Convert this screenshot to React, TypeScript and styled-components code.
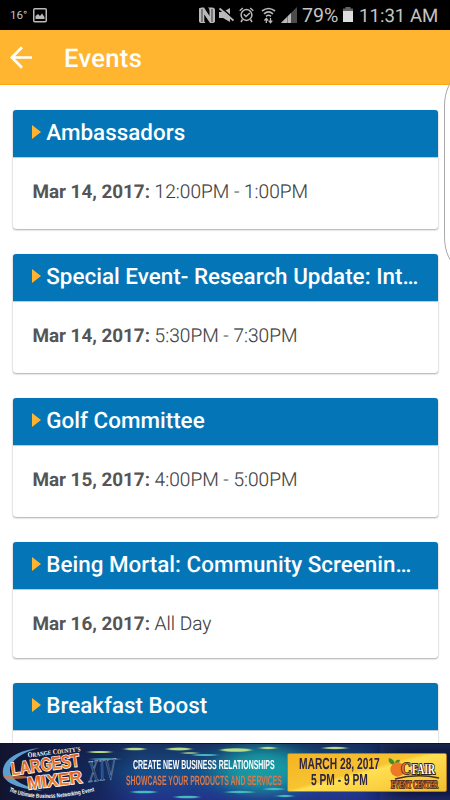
import React from "react";
import styled, { createGlobalStyle } from "styled-components";

const Global = createGlobalStyle`
  * { box-sizing: border-box; }
  html, body { margin: 0; padding: 0; overflow: hidden; }
  body {
    background: #fff;
    font-family: Roboto, "Noto Sans", sans-serif;
    text-rendering: geometricPrecision;
  }
`;

const Screen = styled.div`
  position: relative;
  display: flex;
  flex-direction: column;
  width: 450px;
  height: 800px;
  overflow: hidden;
  background: #fff;
`;

const StatusBar = styled.header`
  display: flex;
  flex: none;
  align-items: center;
  justify-content: space-between;
  height: 30px;
  padding: 0 12px 0 10px;
  background: #000;
  color: #c4c4c4;
`;

const StatusGroup = styled.div`
  display: flex;
  align-items: center;
`;

const IconRow = styled.div`
  display: grid;
  grid-template-columns: 20px 20px 22px 20px 21px;
  align-items: center;
`;

const Temperature = styled.span`
  width: 23px;
  font-size: 11.5px;
  line-height: 30px;
`;

const StatusText = styled.span<{ $width: number; $size: number }>`
  width: ${(p) => p.$width}px;
  padding-top: 2px;
  font-size: ${(p) => p.$size}px;
  line-height: 30px;
  white-space: nowrap;
`;

const Clock = styled(StatusText)`
  margin-left: 6px;
`;

const AppBar = styled.div`
  display: flex;
  flex: none;
  align-items: center;
  height: 55px;
  padding-left: 10px;
  background: #ffb52f;
  border-bottom: 1px solid #fba90f;
`;

const BackButton = styled.button`
  display: flex;
  width: 54px;
  padding: 0;
  border: 0;
  background: none;
`;

const PageTitle = styled.h1`
  margin: 3px 0 0;
  color: #fff;
  font-size: 25.6px;
  font-weight: 500;
  letter-spacing: 0.3px;
`;

const EventList = styled.main`
  display: flex;
  flex: 1;
  flex-direction: column;
  gap: 25px;
  min-height: 0;
  padding: 25px 12.5px 0;
  overflow: hidden;
`;

const Card = styled.article<{ $height: number }>`
  flex: none;
  height: ${(p) => p.$height}px;
  border-radius: 3px;
  background: #fff;
  box-shadow: 0 1px 2px rgba(0, 0, 0, 0.32), 0 0 1px rgba(0, 0, 0, 0.22);
  overflow: hidden;
`;

const CardHeader = styled.div`
  display: flex;
  align-items: center;
  gap: 5.3px;
  height: 47px;
  padding-left: 19.5px;
  background: #0476b8;
  box-shadow: 0 1px 0 #c3cbd5;
`;

const Marker = styled.span`
  width: 0;
  height: 0;
  margin-top: -3px;
  border-top: 7px solid transparent;
  border-bottom: 7px solid transparent;
  border-left: 9.5px solid #ffb52f;
`;

const CardTitle = styled.h2`
  margin: -1px 0 0;
  color: #fff;
  font-size: 22.4px;
  font-weight: 500;
  letter-spacing: 0.02px;
  white-space: nowrap;
`;

const CardBody = styled.p`
  margin: 0;
  padding: 23px 0 0 20px;
  color: #3c3c3c;
  font-size: 19.1px;
  font-weight: 300;
  line-height: 24px;
  white-space: nowrap;
  -webkit-text-stroke: 0.1px #3c3c3c;
`;

const EventDate = styled.strong`
  color: #555;
  font-size: 18.9px;
  font-weight: 700;
  letter-spacing: -0.04px;
  -webkit-text-stroke: 0;
`;

const EdgeHandle = styled.div`
  position: absolute;
  top: 78px;
  left: 444px;
  width: 40px;
  height: 187px;
  border: 1px solid #aaa;
  border-radius: 14px / 28px;
  background: #fff;
`;

const Banner = styled.footer`
  position: relative;
  display: flex;
  flex: none;
  height: 57.5px;
  overflow: hidden;
  background: #142b68;
  border-top: 1px solid #101322;
`;

const BannerArt = styled.svg`
  position: absolute;
  inset: 0;
`;

const MixerLogo = styled.svg`
  position: relative;
  flex: none;
`;

const Pitch = styled.div`
  position: relative;
  flex: none;
  width: 155px;
  margin-left: -6px;
  padding-top: 12px;
`;

const BannerLine = styled.div<{ $color: string; $size: number; $scale: number; $indent?: number; $line: number }>`
  width: max-content;
  margin-left: ${(p) => p.$indent ?? 0}px;
  color: ${(p) => p.$color};
  font-family: "Liberation Sans", Arial, sans-serif;
  font-size: ${(p) => p.$size}px;
  font-weight: 700;
  line-height: ${(p) => p.$line}px;
  white-space: nowrap;
  transform: scaleX(${(p) => p.$scale});
  transform-origin: 0 50%;
`;

const Ticket = styled.div`
  position: relative;
  display: flex;
  flex: none;
  width: 160px;
  height: 39px;
  margin: 9px 0 0 6px;
  padding: 2px 0 0 11px;
  background: linear-gradient(165deg, #f5b322 0%, #f7c431 45%, #ffe052 50%, #f4bd2c 100%);
  border: 1px solid #ad7d28;
  border-radius: 2px;
`;

const TicketText = styled.div`
  flex: none;
  width: 87px;
`;

const VenueLogo = styled.svg`
  flex: none;
`;

const NfcIcon = () => (
  <svg width="16" height="17" viewBox="0 0 16 17" fill="#b9b9b9">
    <path d="M0 2Q0 .5 3 .5H5L10.5 9V4Q10.5 1 9 .5H13Q16 .5 16 3V14Q16 16 13 16H11L5.3 7.5V13Q5.3 16 7 16H3Q0 16 0 14Z" />
    <path d="M3 2V15M13 2V15" stroke="#000" strokeWidth=".7" />
  </svg>
);

const MuteIcon = () => (
  <svg width="15" height="16" viewBox="0 0 15 16">
    <path d="M0 5H4L11 1V15L4 11H0Z" fill="#b9b9b9" />
    <path d="M2.5 .8 15 12" stroke="#000" strokeWidth="1.6" />
    <path d="M.5 1.5 14.5 13.5" stroke="#b9b9b9" strokeWidth="1.9" />
  </svg>
);

const AlarmIcon = () => (
  <svg width="15" height="16" viewBox="0 0 15 16" fill="none" stroke="#b9b9b9" strokeWidth="1.5">
    <circle cx="7.5" cy="8" r="5.4" />
    <path d="M.7 3.7 3.8 1M14.3 3.7 11.2 1M3.5 12.5 2 15M11.5 12.5 13 15M4.8 7.2 7 9.5 10.8 6" />
  </svg>
);

const WifiIcon = () => (
  <svg width="15" height="17" viewBox="0 0 15 17" fill="none" stroke="#b9b9b9" strokeWidth="1.6">
    <path d="M1 4Q7.5-1 14 4M3 6.8Q7.5 3 12 6.8M5 9.3Q7.5 7.3 10 9.3" />
    <path d="M5.3 16V12M3.4 13.5 5.3 11.4 7 13.5M9.5 11V15M7.7 13.7 9.5 15.8 11.3 13.7" strokeWidth="1.3" />
  </svg>
);

const SignalIcon = () => (
  <svg width="16" height="16" viewBox="0 0 16 16">
    <path d="M0 16 16 0V16Z" fill="#4c4c4c" />
    <path d="M0 16 10 6V16Z" fill="#b9b9b9" />
    <path d="M6.5 9V16" stroke="#555" strokeWidth=".6" />
  </svg>
);

const BatteryIcon = () => (
  <svg width="10" height="16" viewBox="0 0 10 16">
    <path d="M2.5 0H7.5V1.5H10V4H0V1.5H2.5Z" fill="#646464" />
    <path d="M0 4H10V15H0Z" fill="#dedede" />
  </svg>
);

const events = [
  { title: "Ambassadors", date: "Mar 14, 2017:", time: "12:00PM - 1:00PM", height: 119 },
  { title: "Special Event- Research Update: Int…", date: "Mar 14, 2017:", time: "5:30PM - 7:30PM", height: 119 },
  { title: "Golf Committee", date: "Mar 15, 2017:", time: "4:00PM - 5:00PM", height: 119 },
  { title: "Being Mortal: Community Screenin…", date: "Mar 16, 2017:", time: "All Day", height: 116 },
  { title: "Breakfast Boost", date: "", time: "", height: 119 },
];

export default function App() {
  return (
    <Screen>
      <Global />
      <StatusBar>
        <StatusGroup>
          <Temperature>16°</Temperature>
          <svg width="14" height="15" viewBox="0 0 14 15">
            <rect x=".75" y=".75" width="12.5" height="13" rx="1" fill="none" stroke="#b9b9b9" strokeWidth="1.5" />
            <path d="M2.5 11V8L5 6 7 8 9 5.5 11.5 9V11Z" fill="#b9b9b9" />
          </svg>
        </StatusGroup>
        <StatusGroup>
          <IconRow>
            <NfcIcon />
            <MuteIcon />
            <AlarmIcon />
            <WifiIcon />
            <SignalIcon />
          </IconRow>
          <StatusText $width={41} $size={19.6}>79%</StatusText>
          <BatteryIcon />
          <Clock $width={79} $size={18.6}>11:31 AM</Clock>
        </StatusGroup>
      </StatusBar>

      <AppBar>
        <BackButton aria-label="Back">
          <svg width="23" height="23" viewBox="0 0 23 23" fill="none" stroke="#fff" strokeWidth="2.7">
            <path d="M2 11.5H22M12 1.3 1.9 11.5 12 21.7" />
          </svg>
        </BackButton>
        <PageTitle>Events</PageTitle>
      </AppBar>

      <EventList>
        {events.map((event) => (
          <Card key={event.title} $height={event.height}>
            <CardHeader>
              <Marker />
              <CardTitle>{event.title}</CardTitle>
            </CardHeader>
            {event.date && (
              <CardBody>
                <EventDate>{event.date}</EventDate> {event.time}
              </CardBody>
            )}
          </Card>
        ))}
      </EventList>

      <EdgeHandle />

      <Banner>
        <BannerArt width="450" height="57" viewBox="0 0 450 57" preserveAspectRatio="none">
          <defs>
            <linearGradient id="sea" x1="0" y1="0" x2="0" y2="1">
              <stop offset="0" stopColor="#17305f" />
              <stop offset=".5" stopColor="#164f8b" />
              <stop offset="1" stopColor="#24318a" />
            </linearGradient>
            <linearGradient id="dusk">
              <stop offset="0" stopColor="#12142e" />
              <stop offset=".7" stopColor="#12204e" stopOpacity=".8" />
              <stop offset="1" stopColor="#12204e" stopOpacity="0" />
            </linearGradient>
            <filter id="soft" x="-20%" y="-20%" width="140%" height="140%"><feGaussianBlur stdDeviation="2 .7" /></filter>
            <filter id="glow" x="-60%" y="-60%" width="220%" height="220%"><feGaussianBlur stdDeviation="14 8" /></filter>
          </defs>
          <rect width="450" height="57" fill="url(#sea)" />
          <ellipse cx="262" cy="26" rx="45" ry="23" fill="#149aa3" filter="url(#glow)" />
          <rect width="140" height="57" fill="url(#dusk)" />
          <rect x="380" width="110" height="57" fill="#0d1030" opacity=".85" filter="url(#glow)" />
          <g filter="url(#soft)">
            <g fill="#b9dd86">
              <ellipse cx="135" cy="5" rx="10" ry="1.3" />
              <ellipse cx="100" cy="8" rx="11" ry="1" />
              <ellipse cx="179" cy="5" rx="12" ry="1.5" />
              <ellipse cx="190" cy="9" rx="8" ry=".8" />
              <ellipse cx="236" cy="6" rx="15" ry="1.8" />
              <ellipse cx="268" cy="4" rx="8" ry="1.2" />
              <ellipse cx="335" cy="4" rx="12" ry="1.2" />
            </g>
            <g fill="#48b8bf">
              <ellipse cx="205" cy="11" rx="12" ry="1" />
              <ellipse cx="144" cy="48" rx="12" ry="1.3" />
              <ellipse cx="187" cy="53" rx="12" ry="1.3" />
              <ellipse cx="240" cy="48" rx="14" ry="1.2" />
              <ellipse cx="274" cy="45" rx="10" ry="1.2" />
              <ellipse cx="285" cy="52" rx="8" ry="1.2" />
              <ellipse cx="105" cy="15" rx="14" ry=".8" />
            </g>
          </g>
        </BannerArt>

        <MixerLogo width="132" height="57" viewBox="0 0 132 57">
          <defs>
            <linearGradient id="fire" x1="0" y1="0" x2="0" y2="1">
              <stop offset="0" stopColor="#d44c20" />
              <stop offset="1" stopColor="#ff9a30" />
            </linearGradient>
          </defs>
          <path d="M40 4C16 6 1 17 3 30C5 41 24 45 43 47C23 42 11 36 10 27C9 17 22 8 40 4Z" fill="#5e9fd2" />
          <path d="M3 31 26 32 28 34Q12 36 4 34Z" fill="#e07a3c" opacity=".7" />
          <g fontFamily="Liberation Sans, sans-serif" fontWeight="700">
            <text x="28" y="13.5" transform="rotate(-7 28 13.5)" fill="#fff" stroke="#151a35" strokeWidth="1.2" paintOrder="stroke" fontFamily="Liberation Serif, serif" fontSize="7.5" textLength="53" lengthAdjust="spacingAndGlyphs">O<tspan fontSize="6.3">RANGE</tspan> C<tspan fontSize="6.3">OUNTY’S</tspan></text>
            <g stroke="#fff" strokeWidth="1.5" paintOrder="stroke" fill="url(#fire)">
              <text x="12" y="31.5" transform="rotate(-8 12 31.5)" fontSize="18" textLength="69" lengthAdjust="spacingAndGlyphs">LARGEST</text>
              <text x="28" y="45.5" transform="rotate(-7 28 45.5)" fontSize="17.5" textLength="55" lengthAdjust="spacingAndGlyphs">MIXER</text>
            </g>
            <text x="89" y="38" transform="rotate(-7 89 38)" fill="#1c3764" stroke="#93a7c4" strokeWidth=".6" fontFamily="Liberation Serif, serif" fontSize="31" fontStyle="italic" fontWeight="400" textLength="28" lengthAdjust="spacingAndGlyphs">XIV</text>
            <path id="taglinePath" d="M9 47Q38 61 95 47" fill="none" />
            <text fill="#fff" fontSize="6"><textPath href="#taglinePath" textLength="87" lengthAdjust="spacingAndGlyphs">The Ultimate Business Networking Event</textPath></text>
          </g>
        </MixerLogo>

        <Pitch>
          <BannerLine $color="#fff" $size={13} $scale={0.535} $line={18} $indent={7}>CREATE NEW BUSINESS RELATIONSHIPS</BannerLine>
          <BannerLine $color="#d9764c" $size={13.5} $scale={0.51} $line={14}>SHOWCASE YOUR PRODUCTS AND SERVICES</BannerLine>
        </Pitch>

        <Ticket>
          <TicketText>
            <BannerLine $color="#302543" $size={16} $scale={0.64} $line={18}>MARCH 28, 2017</BannerLine>
            <BannerLine $color="#302543" $size={16} $scale={0.64} $line={14} $indent={12}>5 PM - 9 PM</BannerLine>
          </TicketText>
          <VenueLogo width="58" height="35" viewBox="0 0 58 35">
            <path d="M9 9Q1 8 3 2Q8 3 9 8Q9 3 14 4Q13 9 9 9Z" fill="#438b2c" />
            <circle cx="11.5" cy="13.5" r="7.2" fill="#ed7927" />
            <path d="M9 23Q31 17 53 22" fill="none" stroke="#42301e" strokeWidth="1.6" />
            <g fontFamily="Liberation Serif, serif" fontWeight="700" stroke="#30211b" paintOrder="stroke">
              <text x="15" y="18" fill="#e86c24" strokeWidth="1.5" fontSize="17" textLength="10" lengthAdjust="spacingAndGlyphs">C</text>
              <text x="26" y="18" fill="#fff" strokeWidth="2.2" fontSize="15" textLength="23" lengthAdjust="spacingAndGlyphs">FAIR</text>
              <text x="5" y="32" fill="#e2702a" strokeWidth="1.6" fontSize="11" textLength="47" lengthAdjust="spacingAndGlyphs">EVENT CENTER</text>
            </g>
          </VenueLogo>
        </Ticket>
      </Banner>
    </Screen>
  );
}
